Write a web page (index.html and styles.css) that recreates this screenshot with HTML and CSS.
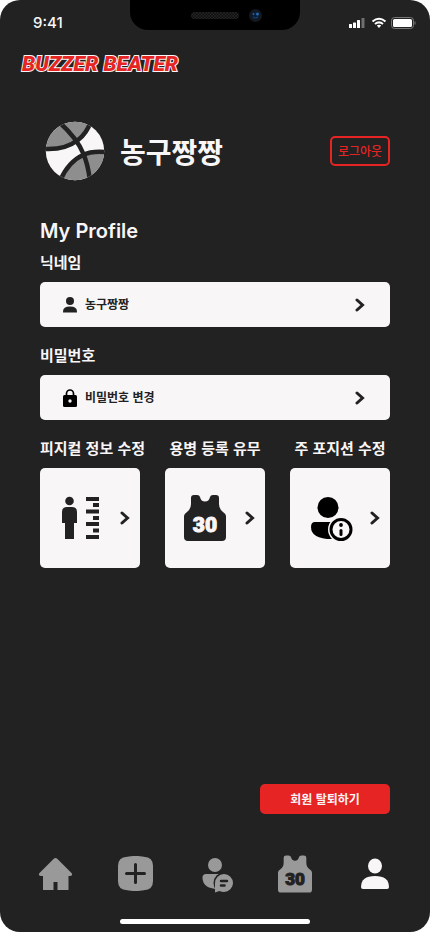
FILE: index.html
```html
<!DOCTYPE html>
<html lang="ko">
<head>
<meta charset="utf-8">
<meta name="viewport" content="width=device-width, initial-scale=1">
<title>My Profile</title>
<link rel="stylesheet" href="styles.css">
</head>
<body>
<svg class="defs" aria-hidden="true">
  <symbol id="chevron" viewBox="0 0 10 14"><path d="M2 2l5.500 5L2 12" fill="none" stroke="currentColor" stroke-width="3" stroke-linecap="round" stroke-linejoin="miter"/></symbol>
  <symbol id="vest" viewBox="0 0 42 46"><path d="M10 0h3Q15.500 0 16 2Q17 6.500 21 6.500T26 2Q26.500 0 29 0h3q3 0 3 3v6q0 5 4 8q3 2 3 4v21q0 4-4 4H4q-4 0-4-4V21q0-2 3-4q4-3 4-8V3q0-3 3-3z" fill="currentColor"/></symbol>
</svg>
<div class="screen">
  <div class="status">
    <span class="time">9:41</span>
    <div class="notch">
      <svg width="170" height="30" viewBox="0 0 170 30" aria-hidden="true">
        <defs><pattern id="mesh" width="3" height="3" patternUnits="userSpaceOnUse"><rect width="3" height="3" fill="#111"/><circle cx="1" cy="1" r=".7" fill="#333"/><circle cx="2.500" cy="2.500" r=".6" fill="#2b2b2b"/></pattern></defs>
        <rect x="61" y="12" width="48" height="7" rx="3.500" fill="url(#mesh)"/>
        <circle cx="125.500" cy="15.500" r="6.500" fill="#15181c"/><circle cx="125.500" cy="15.500" r="4" fill="#0b1d36"/>
        <circle cx="123.500" cy="14" r="1" fill="#2b62a0"/><circle cx="127.500" cy="14" r="1.500" fill="#2868b0"/><path d="M123 17q2.500 2 5 0" stroke="#18477c" fill="none"/>
      </svg>
    </div>
    <svg class="signals" width="68" height="14" viewBox="0 0 68 14" aria-hidden="true">
      <g fill="#fff"><rect x="1" y="8" width="3" height="4" rx=".5"/><rect x="5" y="6.500" width="3" height="5.500" rx=".5"/><rect x="9" y="4" width="3" height="8" rx=".5"/><rect x="13.500" y="2" width="3" height="10" rx=".5" opacity=".35"/></g>
      <g fill="none" stroke="#fff" stroke-width="2"><path d="M24.500 5.500q6.500-5.500 13 0"/><path d="M27 8q4-3.300 8 0"/></g><path d="M28.800 9.500q2.200-1.600 4.400 0L31 12z" fill="#fff"/>
      <rect x="43.500" y="1.500" width="22" height="11" rx="3" fill="none" stroke="#777"/><rect x="45" y="3" width="19" height="8" rx="1.500" fill="#fff"/><path d="M67 5.500v3" stroke="#777"/>
    </svg>
  </div>

  <header class="brand"><a href="#">BUZZER BEATER</a></header>

  <main>
    <section class="user">
      <svg class="ball" width="60" height="60" viewBox="0 0 60 60" aria-hidden="true">
        <defs><clipPath id="disc"><circle cx="30" cy="30" r="29.200"/></clipPath></defs>
        <g clip-path="url(#disc)">
          <rect width="60" height="60" fill="#f8f6f7"/>
          <path d="M0 0H47Q40 16 33 20Q18 30 0 28z" fill="#8e8e8e"/>
          <path d="M17 60Q24 42 37 36Q47 31 60 30V60z" fill="#8e8e8e"/>
          <g fill="none" stroke="#222" stroke-width="4.500"><path d="M0 28Q20 29 33 19Q42 12 46 0"/><path d="M13 0Q32 17 38 32Q43 43 45 60"/><path d="M15 60Q23 41 38 34Q46 30 60 31"/></g>
        </g>
      </svg>
      <h1>농구짱짱</h1>
      <button class="logout" type="button">로그아웃</button>
    </section>

    <h2>My Profile</h2>

    <h3 id="nick">닉네임</h3>
    <button class="field" type="button" aria-describedby="nick">
      <svg width="16" height="18" viewBox="0 0 16 18" aria-hidden="true"><circle cx="8" cy="5" r="4" fill="#222"/><path d="M1 16.500v-1q0-5 7-5t7 5v1z" fill="#222"/></svg>
      <span>농구짱짱</span>
      <svg class="go" width="10" height="14"><use href="#chevron"/></svg>
    </button>

    <h3 id="pass">비밀번호</h3>
    <button class="field" type="button" aria-describedby="pass">
      <svg width="16" height="18" viewBox="0 0 16 18" aria-hidden="true"><path d="M4.500 7V4.500a3.500 3.500 0 0 1 7 0V7" fill="none" stroke="#000" stroke-width="1.700"/><rect x="1" y="6" width="14" height="12" rx="1.500"/><circle cx="8" cy="12" r="1.700" fill="#f8f6f7"/></svg>
      <span>비밀번호 변경</span>
      <svg class="go" width="10" height="14"><use href="#chevron"/></svg>
    </button>

    <div class="cards">
      <section>
        <h3 id="body">피지컬 정보 수정</h3>
        <button class="card" type="button" aria-labelledby="body">
          <svg width="60" height="52" viewBox="0 0 60 52" aria-hidden="true" fill="#222"><circle cx="19.500" cy="9" r="4.300"/><path d="M17 15h5q5 0 5 5v11h-3v16h-9V31h-3V20q0-5 5-5z"/><path d="M36 5h13v4H36zM43 11h6v4h-6zM36 17.500h13v4H36zM43 24h6v4h-6zM36 30h13v4H36zM43 36.500h6v4h-6zM36 43h13v4H36z"/></svg>
          <svg class="go" width="10" height="14"><use href="#chevron"/></svg>
        </button>
      </section>
      <section>
        <h3 id="hire">용병 등록 유무</h3>
        <button class="card" type="button" aria-labelledby="hire">
          <svg width="60" height="52" viewBox="0 0 60 52" aria-hidden="true"><use href="#vest" x="9" y="3" width="42" height="46"/><text class="number light" x="30" y="40">30</text></svg>
          <svg class="go" width="10" height="14"><use href="#chevron"/></svg>
        </button>
      </section>
      <section>
        <h3 id="position">주 포지션 수정</h3>
        <button class="card" type="button" aria-labelledby="position">
          <svg width="60" height="52" viewBox="0 0 60 52" aria-hidden="true"><circle cx="28" cy="15.500" r="10.500"/><path d="M15 30h20v17q-24 1-24-12 0-5 4-5z"/><circle cx="41" cy="37.500" r="13" fill="#f8f6f7"/><circle cx="41" cy="37.500" r="10" fill="none" stroke="#000" stroke-width="3"/><circle cx="41" cy="33" r="1.900"/><path d="M41 38.500v4" stroke="#000" stroke-width="3" stroke-linecap="round"/></svg>
          <svg class="go" width="10" height="14"><use href="#chevron"/></svg>
        </button>
      </section>
    </div>

    <button class="leave" type="button">회원 탈퇴하기</button>
  </main>

  <nav>
    <a href="#" aria-label="홈"><svg width="40" height="40" viewBox="0 0 40 40"><path d="M20.500 4q1 0 2 1L36.500 19q1 1 .5 2t-2 1h-1.500v14H22.500v-8h-4v8H8V22H6q-1.500 0-2-1t.5-2L18.500 5q1-1 2-1z" fill="currentColor"/></svg></a>
    <a href="#" aria-label="추가"><svg width="40" height="40" viewBox="0 0 40 40"><path d="M20.500 2C34 2 38 6 38 19.500S34 37 20.500 37 3 33 3 19.500 7 2 20.500 2z" fill="currentColor"/><path d="M12 3h17q9 0 9 9v15q0 9-9 9H12q-9 0-9-9V12q0-9 9-9z" fill="currentColor"/><path d="M20.500 10.500v18M11.500 19.500h18" stroke="#222" stroke-width="3" stroke-linecap="round"/></svg></a>
    <a href="#" aria-label="채팅"><svg width="40" height="40" viewBox="0 0 40 40"><g fill="currentColor"><circle cx="20" cy="11" r="7"/><path d="M11 20h16v15Q7.500 36 7.500 23.500 7.500 20 11 20z"/><circle cx="29" cy="29" r="10.500" fill="#222"/><path d="M20 38.500V29a9 9 0 1 1 9 9q-2.500 0-4.500-1z"/></g><path d="M26 27h6M26 31.500h3.500" stroke="#222" stroke-width="2.500" stroke-linecap="round"/></svg></a>
    <a href="#" aria-label="용병"><svg width="40" height="40" viewBox="0 0 40 40"><use href="#vest" x="3" y="1" width="34" height="38"/><text class="number dark" x="20" y="31">30</text></svg></a>
    <a class="active" href="#" aria-label="내 프로필"><svg width="40" height="40" viewBox="0 0 40 40"><g fill="currentColor"><ellipse cx="20" cy="12" rx="7" ry="7.500"/><path d="M6 33q0-11 14-11t14 11q0 2-2 2H8q-2 0-2-2z"/></g></svg></a>
  </nav>
  <div class="home-bar"></div>
</div>
</body>
</html>
```
FILE: styles.css
```css
* {
  box-sizing: border-box;
}

body {
  margin: 0;
  background: #fff;
  font-family: "Noto Sans CJK KR", sans-serif;
  color: #f8f6f7;
}

h1, h2, h3 {
  margin: 0;
}

button {
  margin: 0;
  padding: 0;
  border: 0;
  font: inherit;
  font-weight: 700;
  cursor: pointer;
}

svg {
  display: block;
  flex: none;
}

.defs {
  position: absolute;
  width: 0;
  height: 0;
}

.screen {
  display: flex;
  flex-direction: column;
  min-height: 100vh;
  border-radius: 20px;
  overflow: hidden;
  background: #222;
}

.status {
  display: grid;
  grid-template-columns: 1fr 170px 1fr;
  height: 46px;
}

.time {
  padding-left: 33px;
  font: 500 15px/46px Inter, sans-serif;
}

.notch {
  height: 30px;
  border-radius: 0 0 18px 18px;
  background: #000;
}

.signals {
  justify-self: end;
  margin: 16px 14px 0 0;
}

.brand {
  padding: 0 22px;
}

.brand a {
  display: inline-block;
  font: italic 900 21px/36px Roboto, sans-serif;
  color: #e62424;
  -webkit-text-stroke: 2px #f8f6f7;
  paint-order: stroke fill;
  text-decoration: none;
}

main {
  display: flex;
  flex: 1;
  flex-direction: column;
  padding: 39px 40px 0;
}

.user {
  display: flex;
  align-items: center;
  height: 60px;
  margin-bottom: 38px;
  padding-left: 5px;
}

h1 {
  margin-left: 15px;
  font-size: 28px;
  line-height: 40px;
}

.logout {
  width: 60px;
  height: 30px;
  margin-left: auto;
  border: 2px solid #e62424;
  border-radius: 5px;
  background: none;
  color: #e62424;
  font-size: 12px;
  font-weight: 500;
  line-height: 20px;
}

h2 {
  margin-bottom: 9px;
  font: 600 20px/24px Inter, sans-serif;
}

h3 {
  margin-bottom: 10px;
  font-size: 15px;
  line-height: 20px;
  white-space: nowrap;
}

.field {
  display: flex;
  align-items: center;
  height: 45px;
  margin-bottom: 18px;
  padding: 0 25px 0 22px;
  border-radius: 5px;
  background: #f8f6f7;
  color: #222;
  font-size: 12px;
  line-height: 20px;
}

.field span {
  margin-left: 7px;
  padding-bottom: 2px;
}

.go {
  margin-left: auto;
  color: #222;
}

.cards {
  display: grid;
  grid-template-columns: repeat(3, minmax(0, 1fr));
  gap: 25px;
  text-align: center;
}

.card {
  display: flex;
  align-items: center;
  width: 100%;
  height: 100px;
  padding: 0 10px;
  border-radius: 5px;
  background: #f8f6f7;
  color: #222;
}

.number {
  font: 900 21px Roboto, sans-serif;
  text-anchor: middle;
}

.light {
  fill: #f8f6f7;
  stroke: #f8f6f7;
}

.dark {
  font-size: 17px;
  fill: #222;
  stroke: #222;
}

.leave {
  align-self: flex-end;
  width: 130px;
  height: 30px;
  margin-top: auto;
  border-radius: 5px;
  background: #e62424;
  color: #f8f6f7;
  font-size: 12px;
  line-height: 20px;
}

nav {
  display: grid;
  grid-template-columns: repeat(5, 1fr);
  justify-items: center;
  padding: 40px 15px 25px;
}

nav a {
  color: #999;
}

nav .active {
  color: #f8f6f7;
}

.home-bar {
  width: 44%;
  height: 5px;
  margin: 0 auto 8px;
  border-radius: 3px;
  background: #fff;
}
```
